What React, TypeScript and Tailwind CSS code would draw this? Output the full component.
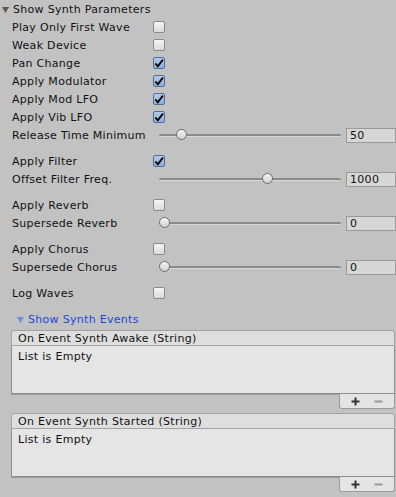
import React from "react";

const font = { fontFamily: '"DejaVu Sans", Verdana, sans-serif' };

const Check = ({ on }: { on?: boolean }) =>
  on ? (
    <div className="w-[12px] h-[12px] rounded-[2px] border border-[#50709c] bg-gradient-to-b from-[#b4cbea] to-[#8eadd8] flex items-center justify-center">
      <svg width="11" height="11" viewBox="0 0 11 11">
        <path d="M1.5 5.5 L4.2 8.5 L9.8 1.2" stroke="#000" strokeWidth="2" fill="none" />
      </svg>
    </div>
  ) : (
    <div className="w-[12px] h-[12px] rounded-[2px] border border-[#8a8a8a] bg-gradient-to-b from-[#f4f4f4] to-[#dadada]" />
  );

const Toggle = ({ label, on, mt }: { label: string; on?: boolean; mt?: boolean }) => (
  <div className={"flex items-center h-[18px] pl-[12px] " + (mt ? "mt-[8px]" : "")}>
    <span className="w-[141px] pt-[2px] text-[11px] text-[#111] tracking-[0.3px]">{label}</span>
    <Check on={on} />
  </div>
);

const Slider = ({ label, value, pct }: { label: string; value: string; pct: number }) => (
  <div className="flex items-center h-[18px] pl-[12px]">
    <span className="w-[147px] pt-[2px] text-[11px] text-[#111] whitespace-nowrap tracking-[0.3px]">{label}</span>
    <div className="relative w-[182px] h-[12px] flex items-center">
      <div className="w-full h-[3px] rounded-full bg-[#8a8a8a] border-b border-[#d8d8d8]" />
      <div
        className="absolute top-0 w-[11px] h-[11px] rounded-full border border-[#6e6e6e] bg-gradient-to-b from-[#f6f6f6] to-[#cfcfcf]"
        style={{ left: `${pct * 171}px` }}
      />
    </div>
    <div className="ml-[5px] flex-1 h-[15px] border border-[#9a9a9a] bg-[#d6d6d6] text-[11px] leading-[13px] pl-[3px] text-[#111] tracking-[0.3px]">
      {value}
    </div>
  </div>
);

const EventBox = ({ title }: { title: string }) => (
  <div className="ml-[11px] mr-[1px]">
    <div className="rounded-t-[3px] border border-[#a3a3a3] bg-[#dedede] h-[16px] pl-[6px] text-[11px] leading-[15px] text-[#111] tracking-[0.3px]">
      {title}
    </div>
    <div className="border-x border-b border-[#8f8f8f] bg-[#e5e5e5] h-[48px] pl-[6px] pt-[3px] text-[11px] text-[#111] tracking-[0.3px] shadow-[0_1px_0_#9a9a9a]">
      List is Empty
    </div>
    <div className="flex justify-end">
      <div className="w-[56px] h-[15px] rounded-b-[3px] border-x border-b border-[#9a9a9a] bg-[#e4e4e4] flex items-center pl-[11px] gap-[14px]">
        <svg width="9" height="9" viewBox="0 0 9 9">
          <path d="M4.5 0.5 V8.5 M0.5 4.5 H8.5" stroke="#333" strokeWidth="2" />
        </svg>
        <svg width="9" height="9" viewBox="0 0 9 9">
          <path d="M0.5 4.5 H8.5" stroke="#999" strokeWidth="2" />
        </svg>
      </div>
    </div>
  </div>
);

export default function App() {
  return (
    <div className="w-[396px] h-[497px] bg-[#c2c2c2] overflow-hidden" style={font}>
      <div className="flex items-center h-[18px] pl-[2px] gap-[4px]">
        <svg width="7" height="7" viewBox="0 0 7 7">
          <polygon points="0,1 7,1 3.5,7" fill="#5a5a5a" />
        </svg>
        <span className="pt-[2px] text-[11px] text-[#111] tracking-[0.3px]">Show Synth Parameters</span>
      </div>
      <Toggle label="Play Only First Wave" />
      <Toggle label="Weak Device" />
      <Toggle label="Pan Change" on />
      <Toggle label="Apply Modulator" on />
      <Toggle label="Apply Mod LFO" on />
      <Toggle label="Apply Vib LFO" on />
      <Slider label="Release Time Minimum" value="50" pct={0.1} />
      <Toggle label="Apply Filter" on mt />
      <Slider label="Offset Filter Freq." value="1000" pct={0.6} />
      <Toggle label="Apply Reverb" mt />
      <Slider label="Supersede Reverb" value="0" pct={0} />
      <Toggle label="Apply Chorus" mt />
      <Slider label="Supersede Chorus" value="0" pct={0} />
      <Toggle label="Log Waves" mt />
      <div className="flex items-center h-[18px] pl-[17px] gap-[4px] mt-[8px]">
        <svg width="7" height="7" viewBox="0 0 7 7">
          <polygon points="0,1 7,1 3.5,7" fill="#6e8ee0" />
        </svg>
        <span className="pt-[2px] text-[11px] text-[#1d47d6] tracking-[0.3px]">Show Synth Events</span>
      </div>
      <div className="mt-[2px] flex flex-col gap-[4px]">
        <EventBox title="On Event Synth Awake (String)" />
        <EventBox title="On Event Synth Started (String)" />
      </div>
    </div>
  );
}
